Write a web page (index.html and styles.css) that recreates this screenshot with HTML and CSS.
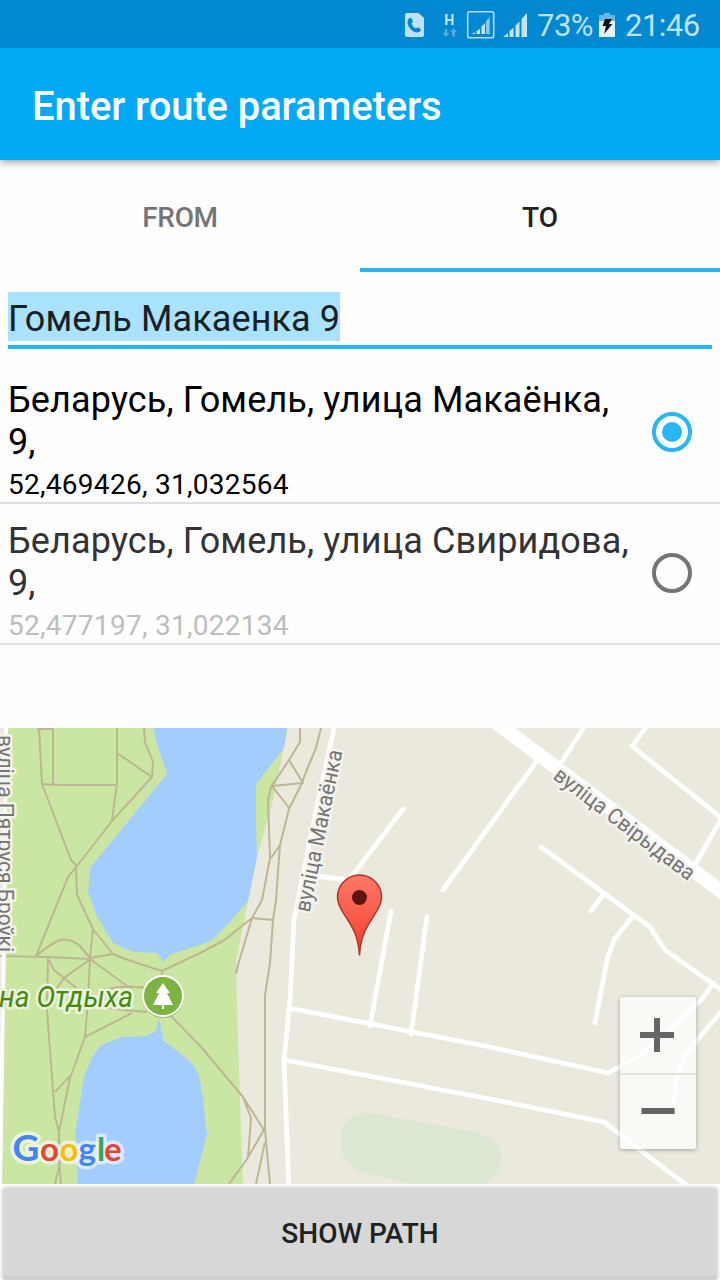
FILE: index.html
```html
<!DOCTYPE html>
<html lang="en">
<head>
<meta charset="utf-8">
<title>Enter route parameters</title>
<link rel="stylesheet" href="styles.css">
</head>
<body>
<div class="screen">
  <div class="status">
    <svg class="status-icons" width="134" height="48" viewBox="400 0 134 48">
      <path fill="#bfe1f4" d="M407 13h11.500l5.500 5v17q0 2-2 2h-15q-2 0-2-2V15q0-2 2-2z"/>
      <path fill="#0288d1" d="M409 18.500q1.500-1.500 2.500 0l1.300 2.500q.3 1-1.300 2.500 1 3.500 4.500 5 1.500-1.500 2.500-1l2 1.500q1 1-.5 2.500-2.500 2-6 .3-5.500-3-6.500-9-.2-3 1.500-4.300z"/>
      <text class="net" x="444.300" y="25" textLength="10" lengthAdjust="spacingAndGlyphs">H</text>
      <path fill="#55aedf" d="M445 29h2v4h2.500L446 37l-3.500-4h2.500zM452 36.500h3V32h2l-3.500-3.500L450 32h2z"/>
      <rect x="467.700" y="11.700" width="26" height="26" rx="2" fill="none" stroke="#b5ddf2" stroke-width="1.600"/>
      <g fill="#c4e4f5"><path d="M472 34l3-2v2zM476.500 31l3.500-2v5h-3.500zM481.500 26.500l3.500-3.500v11h-3.500z"/><path fill="#8bc8e9" d="M486 21l3-3v16h-3z"/><path fill="#55aedf" d="M489 17l1-1v18h-1z"/></g>
      <path fill="#c4e4f5" d="M503 37l5-4v4zM509.500 31l4-3.500V37h-4zM515.500 25.500l4-4V37h-4zM521.500 19l5.500-6v24h-5.500z"/>
    </svg>
    <span class="status-text battery-text">73%</span>
    <svg class="battery" width="18" height="48" viewBox="598 0 18 48">
      <path fill="#67b7e3" d="M599 15h5v-2h6v2h5v6h-16z"/><path fill="#e1f2fa" d="M599 21h16v16h-16z"/>
      <path fill="#111" d="M605 19h7l-3 5h3.500L604 34l2-8h-3.500z"/>
    </svg>
    <span class="status-text clock">21:46</span>
  </div>
  <header class="appbar"><h1>Enter route parameters</h1></header>
  <nav class="tabs"><div class="tab">FROM</div><div class="tab active">TO</div></nav>
  <div class="field"><span class="selection">Гомель Макаенка 9</span></div>
  <div class="list">
    <div class="row chosen">
      <div class="place"><div class="address">Беларусь, Гомель, улица Макаёнка, 9,</div><div class="coords">52,469426, 31,032564</div></div>
      <svg class="radio" width="40" height="40"><circle cx="20" cy="20" r="18" fill="none" stroke="#29b6f6" stroke-width="4"/><circle cx="20" cy="20" r="10" fill="#29b6f6"/></svg>
    </div>
    <div class="row">
      <div class="place"><div class="address">Беларусь, Гомель, улица Свиридова, 9,</div><div class="coords">52,477197, 31,022134</div></div>
      <svg class="radio" width="40" height="40"><circle cx="20" cy="20" r="18" fill="none" stroke="#757575" stroke-width="4"/></svg>
    </div>
  </div>
  <div class="map">
    <svg width="720" height="456" viewBox="0 728 720 456">
      <defs><linearGradient id="pin" x1="0" y1="0" x2="0" y2="1"><stop offset="0" stop-color="#ff7968"/><stop offset=".7" stop-color="#f5503e"/><stop offset="1" stop-color="#ee3826"/></linearGradient></defs>
      <path fill="#ebe9de" d="M0 728h720v456H0z"/>
      <path fill="#cbe6a3" d="M6 728H288L272 805 257 857 248 901 236 962 238 1040 240 1100 243 1184H2z"/>
      <path fill="#a3ccff" d="M154 728H287L284 748 256 784V820L257 857 248 901 231 921 212 940 200 945 171 954 163 962 157 953 133 952 113 943 97 916 88 892 90 868 112 841 167 774 155 738z"/>
      <path fill="#a3ccff" d="M159 1018L163 1040 192 1063 199 1075 203 1098 207 1135 194 1184H78L75 1135 84 1077 92 1057 101 1045 122 1037 146 1036 156 1031z"/>
      <path fill="#dae7d2" d="M341 1135Q344 1118 361 1113Q369 1112 382 1115L470 1131Q492 1136 498 1147Q507 1162 493 1178L486 1184H410L376 1176 356 1171 344 1159Q341 1150 341 1135z"/>
      <g class="paths">
        <path d="M39 728L42 784 71 860 77 866M53 728V784M37 729H54M42 784L60 785H116M117 728V784L112 820M117 753L152 777M144 728L145 742 153 762 152 777 112 821 77 866 68 877 36 956M76 868L77 895 93 929 113 954 125 959 162 971 200 953 223 941 252 918 262 900 270 858 268 800 271 787 289 760 300 742V728M93 929L90 957M36 956Q50 944 60 940Q70 938 80 946L90 958 113 954M0 956L47 957 90 959 127 986 144 988M48 957L47 1010 55 1117 59 1132 60 1163 55 1184M90 959L88 1000 85 1037 70 1078 59 1132M55 1092L70 1076M59 1130V1160L61 1184M49 960L54 970 80 991 95 1003M92 958L64 978 50 998M162 971V980M107 1008L125 1010 147 1012M85 1037L132 1013M100 990L120 987H144M171 1016L202 1048 243 1097 264 1130M321 728L316 748 306 772 302 783 289 809 280 845 271 858M289 760L303 783 272 786 290 809M280 844L276 900 273 920 270 963 265 995V1130L270 1184M252 918L273 920M252 918L238 965 236 974M243 1097L251 1118 248 1158M265 1128L247 1159 229 1184M265 1142L256 1184"/>
      </g>
      <g class="roads">
        <path d="M335 724L315 816 294 920 290 1000 284 1060 289 1190M314 876L349 880 403 809M391 911L370 1026M427 917L411 1034M289 1008L490 1047 608 1073 640 1056 703 998 713 983M285 1060L490 1099 604 1122 640 1150 690 1188M586 724L559 766M536 762L443 890M650 722L632 746 724 820M720 821L693 868M541 847L650 927 665 950 730 996M604 894L591 911M633 916L614 940 607 960 595 1023M726 1006L684 1056 676 1080 674 1106"/>
        <path class="wide" d="M490 718L730 898"/><path class="edge" d="M6 728L4 940 0 1184"/>
      </g>
      <g class="street">
        <text transform="translate(0 735) rotate(90)" x="0" y="2" textLength="217" lengthAdjust="spacingAndGlyphs">вуліца Пятруся Броўкі</text>
        <text transform="translate(309.500 913) rotate(-78.500)" textLength="165" lengthAdjust="spacingAndGlyphs">вуліца Макаёнка</text>
        <text transform="translate(552 778) rotate(37.200)" textLength="171" lengthAdjust="spacingAndGlyphs">вуліца Свірыдава</text>
      </g>
      <text class="park" x="-1" y="1007" textLength="134" lengthAdjust="spacingAndGlyphs">на Отдыха</text>
      <circle cx="163" cy="997" r="21" fill="#809e65" opacity=".6"/><circle cx="163" cy="996" r="20" fill="#7cb342" stroke="#fff" stroke-width="2"/>
      <path fill="#fff" d="M163 983l7 10h-3l6 12h-9v4h-2v-4h-9l6-12h-3z"/>
      <path fill="url(#pin)" stroke="#af3328" stroke-width="1.500" d="M359.500 955.500C358 931 350 925 341 909Q337.500 902 337.500 897A22 22 0 0 1 381.500 897Q381.500 902 378 909C369 925 361 931 359.500 955.500z"/>
      <circle cx="359.500" cy="897.500" r="7.500" fill="#5a150e"/>
      <g class="logo">
        <text x="12.500" y="1161" class="halo"><tspan class="cap">G</tspan><tspan x="40">o</tspan><tspan x="59.500">o</tspan><tspan x="78.500">g</tspan><tspan x="97">l</tspan><tspan x="104">e</tspan></text>
        <text x="12.500" y="1161"><tspan class="cap" fill="#4285f4">G</tspan><tspan x="40" fill="#ea4335">o</tspan><tspan x="59.500" fill="#fbbc05">o</tspan><tspan x="78.500" fill="#4285f4">g</tspan><tspan x="97" fill="#34a853">l</tspan><tspan x="104" fill="#ea4335">e</tspan></text>
      </g>
    </svg>
    <div class="zoom">
      <svg class="zoom-button" viewBox="0 0 76 76"><path d="M20 38h34M37 21v34"/></svg>
      <svg class="zoom-button minus" viewBox="0 0 76 76"><path d="M21 37h34"/></svg>
    </div>
  </div>
  <div class="footer"><button class="show">SHOW PATH</button></div>
</div>
</body>
</html>
```
FILE: styles.css
```css
* { box-sizing: border-box; }
body { margin: 0; background: #fff; font-family: Roboto, "Noto Sans", sans-serif; }
.screen { width: 720px; height: 1280px; overflow: hidden; display: flex; flex-direction: column; background: #fefefe; }
.status { height: 48px; flex: none; background: #0288d1; display: flex; align-items: center; padding-left: 400px; position: relative; }
.status svg { flex: none; display: block; }
.status-text { color: #c0e1f3; font-size: 31px; line-height: 48px; white-space: nowrap; padding-top: 3px; }
.battery-text { width: 64px; padding-left: 3px; letter-spacing: -0.5px; }
.clock { padding-left: 9px; letter-spacing: -0.5px; }
.net { font: 700 14px Roboto, sans-serif; fill: #c4e4f5; }
.appbar { height: 112px; flex: none; background: #03a9f4; padding: 6px 32px 0; display: flex; align-items: center; box-shadow: 0 2px 8px rgba(0,0,0,.4); }
.status { z-index: 1; }
h1 { margin: 0; color: #fff; font-size: 40px; font-weight: 500; line-height: 48px; white-space: nowrap; letter-spacing: -0.1px; }
.tabs { height: 112px; flex: none; display: flex; }
.tab { flex: 1; display: flex; align-items: center; justify-content: center; font-size: 28px; font-weight: 500; letter-spacing: -0.3px; color: #757575; border-bottom: 4px solid transparent; padding-top: 6px; }
.tab.active { color: #212121; border-color: #29b6f6; letter-spacing: 0; }
.field { margin: 20px 8px 0; height: 57px; flex: none; border-bottom: 4px solid #29b6f6; display: flex; align-items: flex-start; font-size: 36px; color: #162026; }
.selection { background: #a9e2fb; height: 49px; line-height: 55px; width: 332px; white-space: nowrap; letter-spacing: 0.1px; }
.list { padding-top: 14px; height: 379px; flex: none; }
.row { height: 141px; padding: 16px 28px 0 8px; border-bottom: 2px solid #dfdfdf; display: flex; justify-content: space-between; }
.place { width: 628px; color: #333; }
.address { font-size: 36px; line-height: 42px; letter-spacing: 0.14px; }
.coords { font-size: 28px; line-height: 33px; margin-top: 5px; color: #bdbdbd; letter-spacing: 0.28px; }
.chosen .place, .chosen .coords { color: #000; }
.radio { flex: none; margin-top: 33px; }
.map { height: 456px; flex: none; position: relative; }
.map > svg { display: block; }
.paths { fill: none; stroke: #bdb694; stroke-width: 2; stroke-linejoin: round; }
.roads { fill: none; stroke: #fff; stroke-width: 4.8; stroke-linecap: round; stroke-linejoin: round; }
.wide { stroke-width: 14; }
.edge { stroke-width: 4; }
.street { font-size: 22px; fill: #757575; stroke: #f4f3ee; stroke-width: 5px; paint-order: stroke; stroke-linejoin: round; }
.park { font-size: 28.5px; font-style: italic; font-weight: 400; fill: #468a0c; stroke: #ebf4df; stroke-width: 5px; paint-order: stroke; stroke-linejoin: round; }
.logo { font: 700 33px Lato, sans-serif; }
.cap { font-size: 37px; }
.halo { fill: none; stroke: #fff; stroke-opacity: .6; stroke-width: 7px; stroke-linejoin: round; }
.zoom { position: absolute; right: 24px; bottom: 35px; width: 76px; height: 152px; background: rgba(255,255,255,.7); border-radius: 3px; box-shadow: 0 1px 4px rgba(0,0,0,.3); }
.zoom-button { display: block; width: 76px; height: 76px; fill: none; stroke: #666; stroke-width: 6; }
.minus { border-top: 2px solid #e3e3df; }
.footer { height: 96px; flex: none; padding: 4px 3px 0; }
.show { display: block; width: 714px; height: 92px; padding: 2px 0 0; border: 0; border-bottom: 4px solid #cecfcf; border-radius: 4px; background: #d6d8d7; box-shadow: 0 0 4px rgba(0,0,0,.3); font: 500 28px Roboto, sans-serif; color: #202121; }
```
